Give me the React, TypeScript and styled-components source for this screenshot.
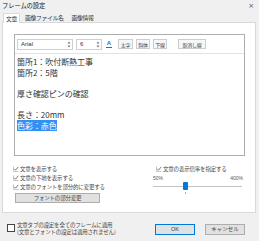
import React from 'react';
import styled, { createGlobalStyle } from 'styled-components';

const Global = createGlobalStyle`
  html, body { margin: 0; padding: 0; background: #f0f0f0; }
  body { font-family: "Noto Sans CJK JP", "Noto Sans", sans-serif; }
`;

const Window = styled.div`
  width: 259px;
  height: 241px;
  box-sizing: border-box;
  background: #f0f0f0;
  display: flex;
  flex-direction: column;
  font-size: 6px;
  color: #333;
  overflow: hidden;
`;

const TitleBar = styled.div`
  height: 12px;
  display: flex;
  align-items: center;
  justify-content: space-between;
  padding: 0 5px 0 2px;
`;

const Title = styled.span`
  font-size: 6.3px;
  line-height: 12px;
  color: #222;
  letter-spacing: -0.1px;
`;

const Close = styled.span`
  font-family: "DejaVu Sans", sans-serif;
  font-size: 7px;
  color: #555;
  line-height: 12px;
`;

const Tabs = styled.div`
  height: 10px;
  display: flex;
  align-items: flex-end;
  padding-left: 3px;
  gap: 2px;
`;

const Tab = styled.div<{ $active?: boolean }>`
  font-size: 5.8px;
  line-height: 9px;
  padding: 0 2px;
  letter-spacing: -0.3px;
  background: ${p => (p.$active ? '#fff' : 'transparent')};
  border: 1px solid ${p => (p.$active ? '#d9d9d9' : 'transparent')};
  border-bottom: none;
  position: relative;
  margin-bottom: ${p => (p.$active ? '-1px' : '0')};
  z-index: 1;
  color: #333;
`;

const Panel = styled.div`
  margin: 0 3px 0 2px;
  height: 191px;
  box-sizing: border-box;
  border: 1px solid #d9d9d9;
  background: #fff;
  padding: 11px 10px 0 11px;
  display: flex;
  flex-direction: column;
`;

const Editor = styled.div`
  width: 231px;
  height: 122px;
  box-sizing: border-box;
  border: 1px solid #adadad;
  display: flex;
  flex-direction: column;
`;

const Toolbar = styled.div`
  height: 19px;
  box-sizing: border-box;
  border-bottom: 1px solid #e3e3e3;
  display: flex;
  align-items: center;
  padding-left: 2px;
`;

const Select = styled.div<{ $w: number; $ml?: number }>`
  width: ${p => p.$w}px;
  margin-left: ${p => p.$ml ?? 0}px;
  height: 11px;
  box-sizing: border-box;
  border: 1px solid #cfcfcf;
  background: #fff;
  display: flex;
  align-items: center;
  justify-content: space-between;
  padding: 0 1px 0 3px;
  font-family: "Liberation Sans", Arial, sans-serif;
  font-size: 6px;
  color: #333;
`;

const ToolButton = styled.div<{ $w: number; $ml?: number }>`
  width: ${p => p.$w}px;
  margin-left: ${p => p.$ml ?? 3}px;
  height: 10px;
  box-sizing: border-box;
  border: 1px solid #cdcdcd;
  background: #f7f7f7;
  display: flex;
  align-items: center;
  justify-content: center;
  font-size: 5px;
  color: #444;
  white-space: nowrap;
  letter-spacing: -0.2px;
`;

const ColorA = styled.div`
  width: 10px;
  height: 10px;
  margin-left: 2px;
  display: flex;
  flex-direction: column;
  align-items: center;
  justify-content: center;
  font-family: "Liberation Sans", Arial, sans-serif;
  font-weight: bold;
  font-size: 6px;
  line-height: 6px;
  color: #1f6fd1;
`;

const ColorBar = styled.div`
  width: 6px;
  height: 1px;
  margin-top: 1px;
  background: #1f6fd1;
`;

const TextArea = styled.div`
  flex: 1;
  padding: 3px 2px 0 2px;
  font-size: 8px;
  line-height: 10.7px;
  color: #333;
  letter-spacing: -0.05px;
`;

const Line = styled.div`
  height: 10.7px;
  white-space: nowrap;
`;

const Selected = styled.span`
  background: #3391f5;
  color: #fff;
`;

const Options = styled.div`
  display: flex;
  margin-top: 8px;
`;

const LeftCol = styled.div`
  width: 140px;
  margin-left: -1px;
  display: flex;
  flex-direction: column;
`;

const RightCol = styled.div`
  width: 90px;
  display: flex;
  flex-direction: column;
`;

const CheckRow = styled.div<{ $ml?: number }>`
  height: 9px;
  display: flex;
  align-items: center;
  gap: 1px;
  margin-left: ${p => p.$ml ?? 0}px;
  font-size: 5.5px;
  color: #444;
  white-space: nowrap;
  letter-spacing: -0.2px;
`;

const WideButton = styled.div`
  width: 85px;
  height: 10px;
  margin: 2px 0 0 2px;
  box-sizing: border-box;
  border: 1px solid #adadad;
  background: #e1e1e1;
  display: flex;
  align-items: center;
  justify-content: center;
  font-size: 5.5px;
  color: #444;
  letter-spacing: -0.2px;
`;

const ScaleLabels = styled.div`
  height: 9px;
  display: flex;
  justify-content: space-between;
  align-items: center;
  font-size: 5px;
  color: #555;
  font-family: "Liberation Sans", Arial, sans-serif;
`;

const Slider = styled.div`
  position: relative;
  height: 14px;
  margin-right: 1px;
`;

const Track = styled.div`
  position: absolute;
  left: 0;
  right: 0;
  top: 4px;
  height: 1px;
  background: #c4c4c4;
`;

const Thumb = styled.div`
  position: absolute;
  left: 30px;
  top: 0;
  width: 5px;
  height: 8px;
  border-radius: 1px;
  background: #0078d7;
`;

const Tick = styled.div`
  position: absolute;
  left: 32px;
  top: 10px;
  width: 1px;
  height: 2px;
  background: #79b4e6;
`;

const Footer = styled.div`
  flex: 1;
  display: flex;
  align-items: center;
  padding: 4px 0 0 7px;
`;

const ApplyAll = styled.div`
  display: flex;
  align-items: flex-start;
  gap: 2px;
  width: 148px;
  font-size: 5.5px;
  line-height: 7px;
  color: #444;
  letter-spacing: -0.2px;
`;

const EmptyBox = styled.div`
  width: 8px;
  height: 8px;
  margin-top: 2px;
  box-sizing: border-box;
  border: 1px solid #444;
  background: #fff;
  flex-shrink: 0;
`;

const DialogButton = styled.div<{ $primary?: boolean; $ml?: number }>`
  width: 40px;
  height: 11px;
  margin-left: ${p => p.$ml ?? 0}px;
  box-sizing: border-box;
  border: 1px solid ${p => (p.$primary ? '#0078d7' : '#adadad')};
  background: #e1e1e1;
  display: flex;
  align-items: center;
  justify-content: center;
  font-size: 5.5px;
  color: #444;
  font-family: "Liberation Sans", "Noto Sans CJK JP", sans-serif;
`;

const Spin = () => (
  <svg width="4" height="7" viewBox="0 0 4 7">
    <path d="M2 0.5 L3.5 2.5 H0.5 Z M2 6.5 L3.5 4.5 H0.5 Z" fill="#777" />
  </svg>
);

const Check = () => (
  <svg width="6" height="6" viewBox="0 0 6 6">
    <path d="M0.5 0.5 V5.5 H5.5" stroke="#b8b8b8" strokeWidth="0.8" fill="none" />
    <path d="M1.3 2.8 L2.5 4.2 L5.2 0.9" stroke="#555" strokeWidth="0.8" fill="none" />
  </svg>
);

export default function App() {
  return (
    <>
      <Global />
      <Window>
        <TitleBar>
          <Title>フレームの設定</Title>
          <Close>×</Close>
        </TitleBar>
        <Tabs>
          <Tab $active>文章</Tab>
          <Tab>画像ファイル名</Tab>
          <Tab>画像情報</Tab>
        </Tabs>
        <Panel>
          <Editor>
            <Toolbar>
              <Select $w={56} $ml={0}>
                <span>Arial</span>
                <Spin />
              </Select>
              <Select $w={26} $ml={3}>
                <span>6</span>
                <Spin />
              </Select>
              <ColorA>
                A
                <ColorBar />
              </ColorA>
              <ToolButton $w={15} $ml={4}>太字</ToolButton>
              <ToolButton $w={14}>斜体</ToolButton>
              <ToolButton $w={14}>下線</ToolButton>
              <ToolButton $w={28} $ml={11}>取消し線</ToolButton>
            </Toolbar>
            <TextArea>
              <Line>箇所1：吹付断熱工事</Line>
              <Line>箇所2：5階</Line>
              <Line />
              <Line>厚さ確認ピンの確認</Line>
              <Line />
              <Line>長さ：20mm</Line>
              <Line>
                <Selected>色彩：赤色</Selected>
              </Line>
            </TextArea>
          </Editor>
          <Options>
            <LeftCol>
              <CheckRow>
                <Check />
                文章を表示する
              </CheckRow>
              <CheckRow>
                <Check />
                文章の下地を表示する
              </CheckRow>
              <CheckRow>
                <Check />
                文章のフォントを部分的に変更する
              </CheckRow>
              <WideButton>フォントの部分変更</WideButton>
            </LeftCol>
            <RightCol>
              <CheckRow $ml={3}>
                <Check />
                文章の表示倍率を指定する
              </CheckRow>
              <ScaleLabels>
                <span>50%</span>
                <span>400%</span>
              </ScaleLabels>
              <Slider>
                <Track />
                <Thumb />
                <Tick />
              </Slider>
            </RightCol>
          </Options>
        </Panel>
        <Footer>
          <ApplyAll>
            <EmptyBox />
            <div>
              文章タブの設定を全てのフレームに適用
              <br />
              (文章とフォントの設定は適用されません)
            </div>
          </ApplyAll>
          <DialogButton $primary>OK</DialogButton>
          <DialogButton $ml={10}>キャンセル</DialogButton>
        </Footer>
      </Window>
    </>
  );
}
